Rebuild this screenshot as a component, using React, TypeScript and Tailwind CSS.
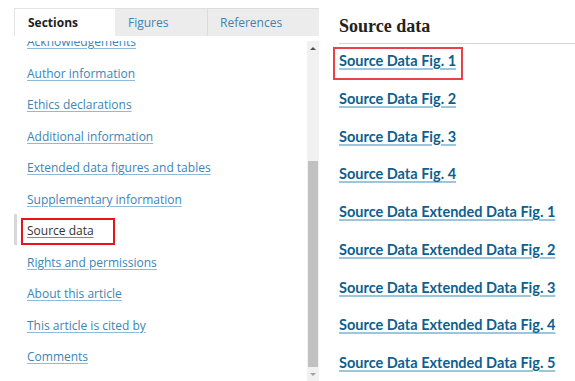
import React from "react";

const sections = [
  "Author information",
  "Ethics declarations",
  "Additional information",
  "Extended data figures and tables",
  "Supplementary information",
  "Source data",
  "Rights and permissions",
  "About this article",
  "This article is cited by",
  "Comments",
];

const sourceLinks = [
  "Source Data Fig. 1",
  "Source Data Fig. 2",
  "Source Data Fig. 3",
  "Source Data Fig. 4",
  "Source Data Extended Data Fig. 1",
  "Source Data Extended Data Fig. 2",
  "Source Data Extended Data Fig. 3",
  "Source Data Extended Data Fig. 4",
  "Source Data Extended Data Fig. 5",
];

function Tabs() {
  return (
    <div className="relative z-10 ml-[14px] flex h-[28px] w-[305px] text-[12px]">
      <div className="flex w-[101px] items-center border-t border-l border-[#e4e4e4] bg-white pl-[13px] font-bold text-[#222]">
        Sections
      </div>
      <div className="flex w-[92px] items-center border-t border-[#e0e0e0] bg-[#ececec] pl-[13px] text-[#3a85b8]">
        Figures
      </div>
      <div className="flex flex-1 items-center border-t border-l border-[#dcdcdc] bg-[#ececec] pl-[12px] text-[#3a85b8]">
        References
      </div>
    </div>
  );
}

function Scrollbar() {
  return (
    <div className="flex w-[12px] flex-col bg-[#f1f1f1]">
      <div className="flex h-[14px] items-center justify-center">
        <div className="h-0 w-0 border-x-[3px] border-b-[3px] border-x-transparent border-b-[#505050]" />
      </div>
      <div className="h-[106px]" />
      <div className="mx-[1px] flex-1 bg-[#c1c1c1]" />
      <div className="flex h-[14px] items-center justify-center">
        <div className="h-0 w-0 border-x-[3px] border-t-[3px] border-x-transparent border-t-[#a0a0a0]" />
      </div>
    </div>
  );
}

function SectionList() {
  return (
    <div className="relative mt-[5px] flex h-[340px] w-[319px] overflow-hidden">
      <ul className="-mt-[15px] flex-1 text-[12px] leading-[31.5px]">
        <li className="pl-[27px]">
          <span className="text-[#3a85b8] underline decoration-[#8dbbd8] underline-offset-2">Acknowledgements</span>
        </li>
        {sections.map((s) =>
          s === "Source data" ? (
            <li key={s} className="relative pl-[27px]">
              <div className="absolute -top-[1px] left-[14px] h-[31px] w-[3px] bg-[#d8d8d8]" />
              <div className="absolute top-[3px] left-[21px] h-[27px] w-[94px] border-2 border-[#e8141b]" />
              <span className="text-[#333] underline decoration-[#888] underline-offset-2">{s}</span>
            </li>
          ) : (
            <li key={s} className="pl-[27px]">
              <span className="text-[#3a85b8] underline decoration-[#8dbbd8] underline-offset-2">{s}</span>
            </li>
          )
        )}
      </ul>
      <Scrollbar />
    </div>
  );
}

export default function App() {
  return (
    <div className="flex h-[381px] w-[575px] overflow-hidden bg-white" style={{ fontFamily: '"Open Sans", "Noto Sans", sans-serif' }}>
      <div className="flex w-[333px] flex-col pt-[8px]">
        <Tabs />
        <SectionList />
      </div>
      <div className="flex-1 pt-[14px]">
        <h2
          className="ml-[6px] border-b border-[#d5d5d5] pb-[5px] text-[18px] font-bold leading-[24px] text-[#222]"
          style={{ fontFamily: '"Liberation Serif", serif' }}
        >
          Source data
        </h2>
        <ul className="-mt-[2px] text-[14.5px] font-bold leading-[37.75px]" style={{ fontFamily: "Lato, sans-serif" }}>
          {sourceLinks.map((s, i) => (
            <li key={s} className="relative pl-[6px]">
              {i === 0 ? (
                <div className="absolute top-[5px] left-0 h-[33px] w-[130px] border-2 border-[#e8414a]" />
              ) : null}
              <span className="text-[#0e5f8f] underline decoration-[#9cc6de] decoration-2 underline-offset-2">
                {s}
              </span>
            </li>
          ))}
        </ul>
      </div>
    </div>
  );
}
